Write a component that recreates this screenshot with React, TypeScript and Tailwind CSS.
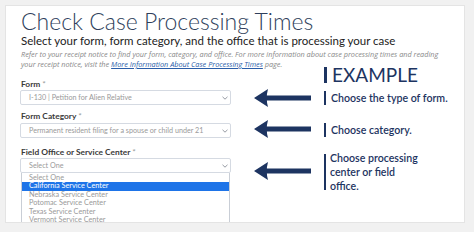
import React from "react";

function Chevron() {
  return (
    <svg width="6" height="4" viewBox="0 0 6 4" className="shrink-0">
      <polyline points="0.5,0.8 3,3.2 5.5,0.8" fill="none" stroke="#8a8f99" strokeWidth="0.9" />
    </svg>
  );
}

function Arrow() {
  return (
    <svg width="57" height="18" viewBox="0 0 57 18" className="block">
      <path d="M0 9 L14 0 Q11.5 9 14 18 Z" fill="#1d3461" />
      <rect x="12" y="6.5" width="45" height="5" fill="#1d3461" />
    </svg>
  );
}

function Select({ text }: { text: string }) {
  return (
    <div className="h-[15px] w-[211px] border border-[#d5dae2] rounded-[2px] bg-white flex items-center justify-between pl-[8px] pr-[2px]">
      <span className="text-[7.2px] text-[#9a9a9a] leading-none">{text}</span>
      <Chevron />
    </div>
  );
}

function Label({ text, className }: { text: string; className: string }) {
  return (
    <div className={"h-[10px] leading-[10px] text-[8.4px] font-bold text-[#3a3a3a] pl-[1px] " + className}>
      {text} <span className="text-[#999] font-normal">*</span>
    </div>
  );
}

export default function App() {
  const options = [
    "Select One",
    "California Service Center",
    "Nebraska Service Center",
    "Potomac Service Center",
    "Texas Service Center",
    "Vermont Service Center",
  ];
  return (
    <div className="w-[474px] h-[232px] bg-[#f1f1f1] pt-[5px] pl-[5px] pr-[9px] pb-[9px] overflow-hidden font-['Lato',sans-serif]">
      <div className="h-full bg-white border border-[#e4e4e4] pl-[15px] pt-[1px] overflow-hidden">
        <h1 className="text-[23px] leading-[26px] font-light text-[#2f3f5c] mt-[1px]">Check Case Processing Times</h1>
        <p className="text-[11.5px] leading-[14px] text-[#222] font-normal">
          Select your form, form category, and the office that is processing your case
        </p>
        <div className="font-['Open_Sans',sans-serif] text-[7.3px] leading-[10px] italic text-[#888] mt-[1px]">
          <p className="whitespace-nowrap">
            Refer to your receipt notice to find your form, category, and office. For more information about case processing times and reading
          </p>
          <p className="whitespace-nowrap">
            <span>your receipt notice, visit the </span>
            <span className="text-[#2a5da8] underline">More Information About Case Processing Times</span>
            <span> page.</span>
          </p>
        </div>
        <div className="flex">
          <div className="w-[212px] -ml-[1px]">
            <Label text="Form" className="mt-[10px]" />
            <div className="mt-[1px]">
              <Select text="I-130 | Petition for Alien Relative" />
            </div>
            <Label text="Form Category" className="mt-[6px]" />
            <div className="mt-[2px]">
              <Select text="Permanent resident filing for a spouse or child under 21" />
            </div>
            <Label text="Field Office or Service Center" className="mt-[9px]" />
            <div className="mt-[1px]">
              <Select text="Select One" />
            </div>
            <div className="w-[209px] ml-[1px] border border-t-0 border-[#c9ced6] bg-white pt-[0.5px]">
              {options.map((o, i) => (
                <div
                  key={o}
                  className={
                    "h-[8.5px] leading-[8.5px] text-[7.3px] pl-[7px] " +
                    (i === 1 ? "bg-[#1e74e8] text-white" : "text-[#9a9a9a]")
                  }
                >
                  {o}
                </div>
              ))}
            </div>
          </div>
          <div className="ml-[22px] flex flex-col">
            <div className="mt-[20px]"><Arrow /></div>
            <div className="mt-[13px]"><Arrow /></div>
            <div className="mt-[24px]"><Arrow /></div>
          </div>
          <div className="ml-[13px] flex flex-col text-[#1d3461]">
            <div className="flex items-center h-[12px]">
              <div className="w-[3px] h-[16px] shrink-0 bg-[#1d3461]" />
              <span className="ml-[5px] text-[19px] leading-[12px] font-normal">EXAMPLE</span>
            </div>
            <div className="flex items-center h-[14px] mt-[10px]">
              <div className="w-[2px] h-[14px] bg-[#1d3461]" />
              <span className="ml-[5px] text-[10.6px] leading-[14px] font-semibold">Choose the type of form.</span>
            </div>
            <div className="flex items-center h-[14px] mt-[18px]">
              <div className="w-[2px] h-[14px] bg-[#1d3461]" />
              <span className="ml-[5px] text-[10.6px] leading-[14px] font-semibold">Choose category.</span>
            </div>
            <div className="flex items-start mt-[14px]">
              <div className="w-[2px] h-[36px] mt-[3px] bg-[#1d3461]" />
              <span className="ml-[4px] text-[10.6px] leading-[14px] font-semibold w-[94px]">
                Choose processing center or field office.
              </span>
            </div>
          </div>
        </div>
      </div>
    </div>
  );
}
